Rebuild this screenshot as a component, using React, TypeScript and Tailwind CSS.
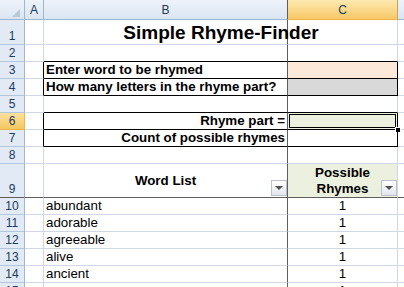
import type { ReactNode } from 'react'

type SheetRow = {
  n: number
  h?: string
  selected?: boolean
  boxAbove?: boolean
  boxed?: boolean
  freeze?: boolean
  b?: ReactNode
  c?: ReactNode
  cFill?: string
  cActive?: boolean
}

// row 15 is only a sliver at the bottom edge, its word is not readable
const words = ['abundant', 'adorable', 'agreeable', 'alive', 'ancient', '']

const rows: Array<SheetRow> = [
  {
    n: 1,
    h: 'h-[25px]',
    b: (
      <div className="w-[354px] shrink-0 text-center text-[19px] leading-[22px] font-bold">
        Simple Rhyme-Finder
      </div>
    ),
  },
  { n: 2, boxAbove: true },
  {
    n: 3,
    boxed: true,
    b: <span className="pl-[2px] font-bold">Enter word to be rhymed</span>,
    cFill: 'bg-[#fde9d9]',
  },
  {
    n: 4,
    boxed: true,
    b: <span className="pl-[2px] font-bold">How many letters in the rhyme part?</span>,
    cFill: 'bg-[#d9d9d9]',
  },
  { n: 5, boxAbove: true },
  {
    n: 6,
    boxed: true,
    selected: true,
    b: <span className="ml-auto pr-[2px] font-bold">Rhyme part =</span>,
    cFill: 'bg-[#ebf1de]',
    cActive: true,
  },
  {
    n: 7,
    boxed: true,
    b: <span className="ml-auto pr-[2px] font-bold">Count of possible rhymes</span>,
  },
  { n: 8 },
  {
    n: 9,
    h: 'h-[34px]',
    freeze: true,
    b: (
      <>
        <span className="w-full self-center text-center font-bold">Word List</span>
        <FilterButton />
      </>
    ),
    c: (
      <>
        <span className="w-full self-center text-center leading-[16px] font-bold">
          Possible
          <br />
          Rhymes
        </span>
        <FilterButton />
      </>
    ),
    cFill: 'bg-[#ebf1de]',
  },
  ...words.map((word, i) => ({
    n: 10 + i,
    b: word ? <span className="pl-[2px]">{word}</span> : undefined,
    c: <span className="w-full text-center">1</span>,
  })),
]

function FilterButton() {
  return (
    <span className="absolute right-0 bottom-[1px] flex h-[16px] w-[16px] items-center justify-center border border-[#b9c1cc] bg-gradient-to-b from-white to-[#e2e6ec]">
      <span className="h-0 w-0 border-x-[4px] border-t-[4px] border-x-transparent border-t-[#505050]" />
    </span>
  )
}

function ColumnHeader() {
  return (
    <div className="flex h-[20px] text-[12px] text-[#213a5c]">
      <div className="relative w-[25px] shrink-0 border-r border-b border-r-[#9eb6ce] border-b-[#9eb6ce] bg-gradient-to-b from-[#eef3fa] to-[#dbe5f2]">
        <span className="absolute right-[4px] bottom-[2px] h-0 w-0 border-b-[8px] border-l-[8px] border-b-[#b9c8da] border-l-transparent" />
      </div>
      <div className="flex w-[19px] shrink-0 items-center justify-center border-r border-b border-r-[#9eb6ce] border-b-[#9eb6ce] bg-gradient-to-b from-[#eef3fa] to-[#dbe5f2]">
        A
      </div>
      <div className="flex w-[244px] shrink-0 items-center justify-center border-r border-b border-r-[#5e5e5e] border-b-[#9eb6ce] bg-gradient-to-b from-[#eef3fa] to-[#dbe5f2]">
        B
      </div>
      <div className="flex w-[110px] shrink-0 items-center justify-center border-r border-b border-r-[#c9a45a] border-b-[#f2b443] bg-gradient-to-b from-[#fde9b0] to-[#f6c865]">
        C
      </div>
      <div className="flex-1 border-b border-b-[#9eb6ce] bg-gradient-to-b from-[#eef3fa] to-[#dbe5f2]" />
    </div>
  )
}

function Row({ row }: { row: SheetRow }) {
  const gridBottom = row.freeze
    ? 'border-b-[#5e5e5e]'
    : row.boxAbove || row.boxed
      ? 'border-b-black'
      : 'border-b-[#d0d7e5]'
  const plainBottom = row.freeze ? 'border-b-[#5e5e5e]' : 'border-b-[#d0d7e5]'

  return (
    <div className={`flex ${row.h ?? 'h-[17px]'} leading-[16px]`}>
      <div
        className={`flex w-[25px] shrink-0 items-end justify-center border-r border-b text-[12px] leading-[15px] text-[#213a5c] ${
          row.selected
            ? 'border-r-[#f2b443] border-b-[#f2b443] bg-gradient-to-b from-[#fbe19f] to-[#f5c660]'
            : `border-r-[#9eb6ce] bg-[#e2eaf5] ${row.freeze ? 'border-b-[#5e5e5e]' : 'border-b-[#b4c6db]'}`
        }`}
      >
        {row.n}
      </div>
      <div
        className={`w-[19px] shrink-0 border-r border-b ${plainBottom} ${
          row.boxed ? 'border-r-black' : 'border-r-[#d0d7e5]'
        }`}
      />
      <div
        className={`relative flex w-[244px] shrink-0 items-end border-r border-b border-r-[#5e5e5e] whitespace-nowrap ${gridBottom}`}
      >
        {row.b}
      </div>
      <div
        className={`relative flex w-[110px] shrink-0 items-end border-r border-b ${gridBottom} ${
          row.boxed ? 'border-r-black' : 'border-r-[#d0d7e5]'
        } ${row.cFill ?? ''}`}
      >
        {row.c}
        {row.cActive && (
          <>
            <span className="absolute inset-[1px] border border-black" />
            <span className="absolute right-[-4px] bottom-[-4px] h-[6px] w-[6px] border border-white bg-black" />
          </>
        )}
      </div>
      <div className={`flex-1 border-b ${plainBottom}`} />
    </div>
  )
}

export default function App() {
  return (
    <div className="h-[287px] w-[404px] overflow-hidden bg-white font-['Liberation_Sans',Arial,sans-serif] text-[13.33px] text-black">
      <ColumnHeader />
      {rows.map((row) => (
        <Row key={row.n} row={row} />
      ))}
    </div>
  )
}
